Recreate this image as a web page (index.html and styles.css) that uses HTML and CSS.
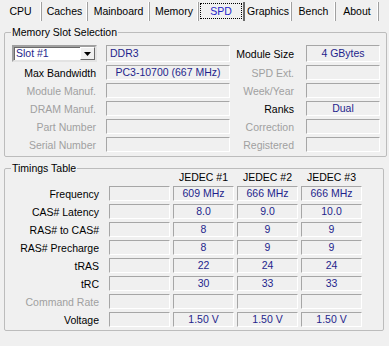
FILE: index.html
```html
<!DOCTYPE html>
<html lang="en">
<head>
  <meta charset="UTF-8" />
  <title>CPU-Z SPD</title>
  <link rel="stylesheet" href="styles.css">
</head>
<body>

  <div class="tabs">
    <div class="tab w-cpu">CPU</div>
    <div class="tab w-caches">Caches</div>
    <div class="tab w-main">Mainboard</div>
    <div class="tab w-mem">Memory</div>
    <div class="tab w-spd active"><span class="focus">SPD</span></div>
    <div class="tab w-gfx">Graphics</div>
    <div class="tab w-bench">Bench</div>
    <div class="tab w-about">About</div>
  </div>

  <fieldset class="group slot-group">
    <legend>Memory Slot Selection</legend>
    <div class="slot-grid">
      <div class="combo">
        <span class="combo-text">Slot #1</span>
        <span class="combo-btn">
          <svg width="7" height="4" viewBox="0 0 7 4"><path d="M0 0h7L3.5 4z" fill="#000"/></svg>
        </span>
      </div>
      <div class="field first text-left">DDR3</div>
      <div class="label">Module Size</div>
      <div class="field first">4 GBytes</div>

      <div class="label">Max Bandwidth</div>
      <div class="field">PC3-10700 (667 MHz)</div>
      <div class="label off">SPD Ext.</div>
      <div class="field"></div>

      <div class="label off">Module Manuf.</div>
      <div class="field"></div>
      <div class="label off">Week/Year</div>
      <div class="field"></div>

      <div class="label off">DRAM Manuf.</div>
      <div class="field"></div>
      <div class="label">Ranks</div>
      <div class="field">Dual</div>

      <div class="label off">Part Number</div>
      <div class="field"></div>
      <div class="label off">Correction</div>
      <div class="field"></div>

      <div class="label off">Serial Number</div>
      <div class="field"></div>
      <div class="label off">Registered</div>
      <div class="field"></div>
    </div>
  </fieldset>

  <fieldset class="group timing-group">
    <legend>Timings Table</legend>
    <div class="timing-grid">
      <div></div>
      <div></div>
      <div class="head">JEDEC #1</div>
      <div class="head">JEDEC #2</div>
      <div class="head">JEDEC #3</div>

      <div class="label">Frequency</div>
      <div class="field"></div>
      <div class="field">609 MHz</div>
      <div class="field">666 MHz</div>
      <div class="field">666 MHz</div>

      <div class="label">CAS# Latency</div>
      <div class="field"></div>
      <div class="field">8.0</div>
      <div class="field">9.0</div>
      <div class="field">10.0</div>

      <div class="label">RAS# to CAS#</div>
      <div class="field"></div>
      <div class="field">8</div>
      <div class="field">9</div>
      <div class="field">9</div>

      <div class="label">RAS# Precharge</div>
      <div class="field"></div>
      <div class="field">8</div>
      <div class="field">9</div>
      <div class="field">9</div>

      <div class="label">tRAS</div>
      <div class="field"></div>
      <div class="field">22</div>
      <div class="field">24</div>
      <div class="field">24</div>

      <div class="label">tRC</div>
      <div class="field"></div>
      <div class="field">30</div>
      <div class="field">33</div>
      <div class="field">33</div>

      <div class="label off">Command Rate</div>
      <div class="field"></div>
      <div class="field"></div>
      <div class="field"></div>
      <div class="field"></div>

      <div class="label">Voltage</div>
      <div class="field"></div>
      <div class="field">1.50 V</div>
      <div class="field">1.50 V</div>
      <div class="field">1.50 V</div>
    </div>
  </fieldset>

</body>
</html>
```

FILE: styles.css
```css
* { box-sizing: border-box; margin: 0; padding: 0; }

body {
  background-color: #f0f0f0;
  font-family: 'Liberation Sans', Arial, sans-serif;
  font-size: 10.5px;
  color: #000;
  width: 389px;
  height: 346px;
  overflow: hidden;
}

/* tab strip */
.tabs {
  display: flex;
  height: 22px;
  padding-top: 2px;
}

.tab {
  height: 19px;
  line-height: 19px;
  text-align: center;
  border-right: 1px solid #a0a0a0;
  box-shadow: inset -1px 0 0 #fff;
}

.w-cpu { width: 42px; }
.w-caches { width: 46px; }
.w-main { width: 62px; }
.w-mem { width: 49px; }
.w-spd { width: 46px; }
.w-gfx { width: 47px; }
.w-bench { width: 44px; }
.w-about { width: 43px; }

.tab.active {
  color: #2323c8;
  padding-top: 2px;
  line-height: 14px;
  border-right: 2px solid #6a6a6a;
  box-shadow: none;
}

.focus {
  display: inline-block;
  width: 40px;
  height: 14px;
  outline: 1px dotted #000;
}

/* group boxes */
.group {
  margin: 0 5px 0 4px;
  border: 1px solid #bcbcbc;
  border-radius: 2px;
  padding: 0 6px 0 7px;
}

.group legend {
  margin-left: -1px;
  padding: 0 1px;
}

.slot-group {
  margin-top: 3px;
  padding-top: 6px;
  padding-bottom: 4px;
}

.slot-group legend { line-height: 14px; }

.timing-group {
  margin-top: 5px;
  padding-bottom: 3px;
}

.timing-group legend { line-height: 12px; }

.slot-grid {
  display: grid;
  grid-template-columns: 94px 124px 76px 74px;
  grid-template-rows: 17px repeat(5, 15px);
  row-gap: 3px;
}

.timing-grid {
  display: grid;
  grid-template-columns: 94px repeat(4, 61px);
  grid-template-rows: 11px repeat(8, 15px);
  column-gap: 3px;
  row-gap: 3px;
  margin-top: -2px;
}

.timing-grid > .label { margin-right: -3px; }

.label {
  text-align: right;
  padding-right: 10px;
  align-self: center;
  white-space: nowrap;
}

.slot-grid .label:nth-child(4n+3) { padding-right: 12px; }

.label.off { color: #a0a0a0; }

.head {
  text-align: center;
  line-height: 11px;
}

.field {
  border: 1px solid;
  border-color: #a6a6a6 #fff #fff #a6a6a6;
  color: #1f1f8c;
  text-align: center;
  line-height: 13px;
  white-space: nowrap;
  overflow: hidden;
}

.field.first { line-height: 15px; }

.text-left {
  text-align: left;
  padding-left: 3px;
}

/* slot combo box */
.combo {
  width: 85px;
  display: flex;
  background-color: #fff;
  border: 2px solid;
  border-color: #a0a0a0 #e3e3e3 #e3e3e3 #a0a0a0;
  box-shadow: inset 1px 1px 0 #696969;
}

.combo-text {
  flex: 1;
  color: #1f1f8c;
  line-height: 13px;
  padding-left: 2px;
}

.combo-btn {
  width: 15px;
  display: flex;
  align-items: center;
  justify-content: center;
  background-color: #f0f0f0;
  border: 1px solid;
  border-color: #fff #696969 #696969 #fff;
}
```
